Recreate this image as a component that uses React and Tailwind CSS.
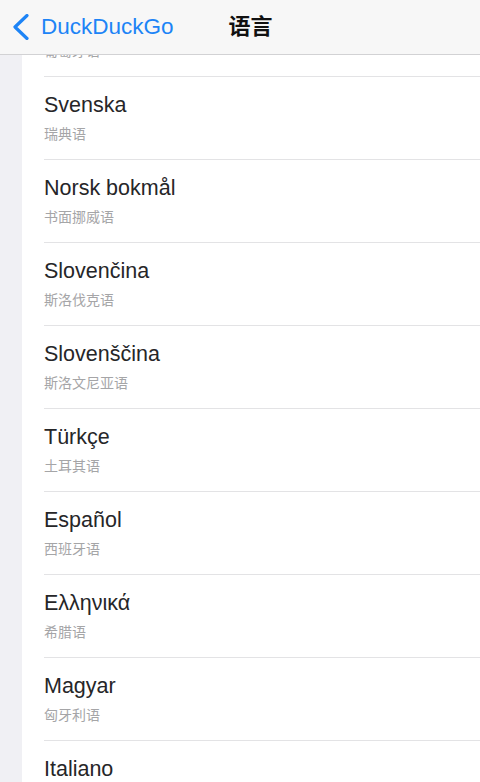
import React from 'react'

const rows = [
  { name: 'Português', zh: '葡萄牙语' },
  { name: 'Svenska', zh: '瑞典语' },
  { name: 'Norsk bokmål', zh: '书面挪威语' },
  { name: 'Slovenčina', zh: '斯洛伐克语' },
  { name: 'Slovenščina', zh: '斯洛文尼亚语' },
  { name: 'Türkçe', zh: '土耳其语' },
  { name: 'Español', zh: '西班牙语' },
  { name: 'Ελληνικά', zh: '希腊语' },
  { name: 'Magyar', zh: '匈牙利语' },
  { name: 'Italiano', zh: '意大利语' },
]

const font = { fontFamily: '"Liberation Sans", "Noto Sans CJK SC", sans-serif' }

const Row = ({ name, zh, first }) => (
  <div className={first ? '' : 'border-t border-[#e3e3e5]'}>
    <div className="pt-[16px] pb-[16px] pr-4">
      <div className="text-[21.5px] leading-[25px] text-[#262628]">{name}</div>
      <div className="mt-[7px] text-[14px] leading-[18px] text-[#a5a5a7]">{zh}</div>
    </div>
  </div>
)

export default function App() {
  return (
    <div className="w-[480px] h-[782px] flex flex-col overflow-hidden bg-white" style={font}>
      <header className="h-[55px] shrink-0 flex items-center bg-[#f7f7f7] border-b border-[#d2d2d4]">
        <div className="flex items-center pl-[12px] text-[#1d84f6]">
          <svg width="18" height="26" viewBox="0 0 18 26" fill="none">
            <path d="M15 1.5 L3 13 L15 24.5" stroke="currentColor" strokeWidth="3.2" strokeLinecap="round" strokeLinejoin="round" />
          </svg>
          <span className="ml-[11px] text-[22.5px] leading-[28px]">DuckDuckGo</span>
        </div>
        <div className="ml-[55px] text-[22px] leading-[28px] font-bold text-[#111]">语言</div>
      </header>
      <div className="flex-1 flex overflow-hidden">
        <div className="w-[22px] shrink-0 bg-[#f0f0f4]"></div>
        <div className="flex-1 pl-[22px] overflow-hidden">
          <div className="-mt-[61px]">
            {rows.map((r, i) => (
              <Row key={r.name} {...r} first={i === 0} />
            ))}
          </div>
        </div>
      </div>
    </div>
  )
}
